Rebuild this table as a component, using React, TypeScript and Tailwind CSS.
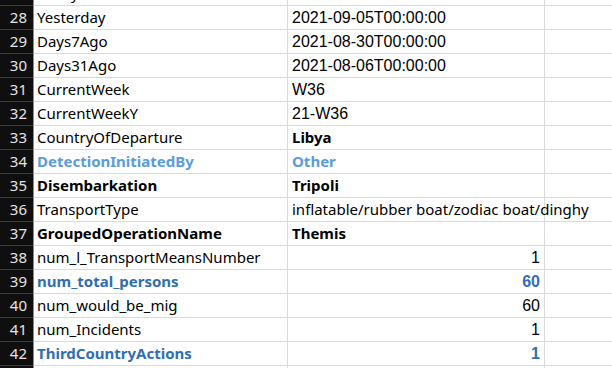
import React from "react";

type Row = {
  n: number;
  a: string;
  b: string;
  aStyle?: string;
  bStyle?: string;
  bFont?: "arial" | "aptos";
  right?: boolean;
};

const LIGHT = "font-bold text-[#5b9bdf]";
const DARK = "font-bold text-[#2f6eb4]";
const BOLD = "font-bold text-black";

const rows: Row[] = [
  { n: 27, a: "Today", b: "2021-09-06T00:00:00", bFont: "arial" },
  { n: 28, a: "Yesterday", b: "2021-09-05T00:00:00", bFont: "arial" },
  { n: 29, a: "Days7Ago", b: "2021-08-30T00:00:00", bFont: "arial" },
  { n: 30, a: "Days31Ago", b: "2021-08-06T00:00:00", bFont: "arial" },
  { n: 31, a: "CurrentWeek", b: "W36", bFont: "arial" },
  { n: 32, a: "CurrentWeekY", b: "21-W36", bFont: "arial" },
  { n: 33, a: "CountryOfDeparture", b: "Libya", bStyle: BOLD, bFont: "aptos" },
  { n: 34, a: "DetectionInitiatedBy", b: "Other", aStyle: LIGHT, bStyle: LIGHT, bFont: "aptos" },
  { n: 35, a: "Disembarkation", b: "Tripoli", aStyle: BOLD, bStyle: BOLD, bFont: "aptos" },
  { n: 36, a: "TransportType", b: "inflatable/rubber boat/zodiac boat/dinghy", bFont: "aptos" },
  { n: 37, a: "GroupedOperationName", b: "Themis", aStyle: BOLD, bStyle: BOLD, bFont: "aptos" },
  { n: 38, a: "num_l_TransportMeansNumber", b: "1", bFont: "arial", right: true },
  { n: 39, a: "num_total_persons", b: "60", aStyle: DARK, bStyle: DARK, bFont: "arial", right: true },
  { n: 40, a: "num_would_be_mig", b: "60", bFont: "arial", right: true },
  { n: 41, a: "num_Incidents", b: "1", bFont: "arial", right: true },
  { n: 42, a: "ThirdCountryActions", b: "1", aStyle: DARK, bStyle: DARK, bFont: "arial", right: true },
  { n: 43, a: "", b: "" },
];

const aptos = "font-['Noto_Sans',sans-serif]";
const arial = "font-['Liberation_Sans',Arial,sans-serif]";

export default function App() {
  return (
    <div className="w-[612px] h-[368px] overflow-hidden bg-white">
      <div className="mt-[-18px] flex flex-col">
        {rows.map((r) => (
          <div key={r.n} className="flex h-[24px] text-[15px] leading-none">
            <div
              className={`w-[33px] shrink-0 bg-[#0f0f0f] border-b border-[#3c3c3c] text-[#e4e4e4] flex items-center justify-end pr-[6px] ${aptos}`}
            >
              {r.n}
            </div>
            <div className="w-[1px] shrink-0 bg-[#8c8c8c]" />
            <div
              className={`w-[254px] shrink-0 border-b border-r border-[#dadada] flex items-center pl-[3px] whitespace-nowrap ${aptos} ${r.aStyle ?? "text-black"}`}
            >
              {r.a}
            </div>
            <div
              className={`w-[257px] shrink-0 border-b border-r border-[#dadada] flex items-center whitespace-nowrap ${r.right ? "justify-end pr-[4px]" : "pl-[4px]"} ${r.bFont === "arial" ? arial + " text-[16px]" : aptos} ${r.bStyle ?? "text-black"}`}
            >
              {r.b}
            </div>
            <div className="flex-1 border-b border-[#dadada]" />
          </div>
        ))}
      </div>
    </div>
  );
}
